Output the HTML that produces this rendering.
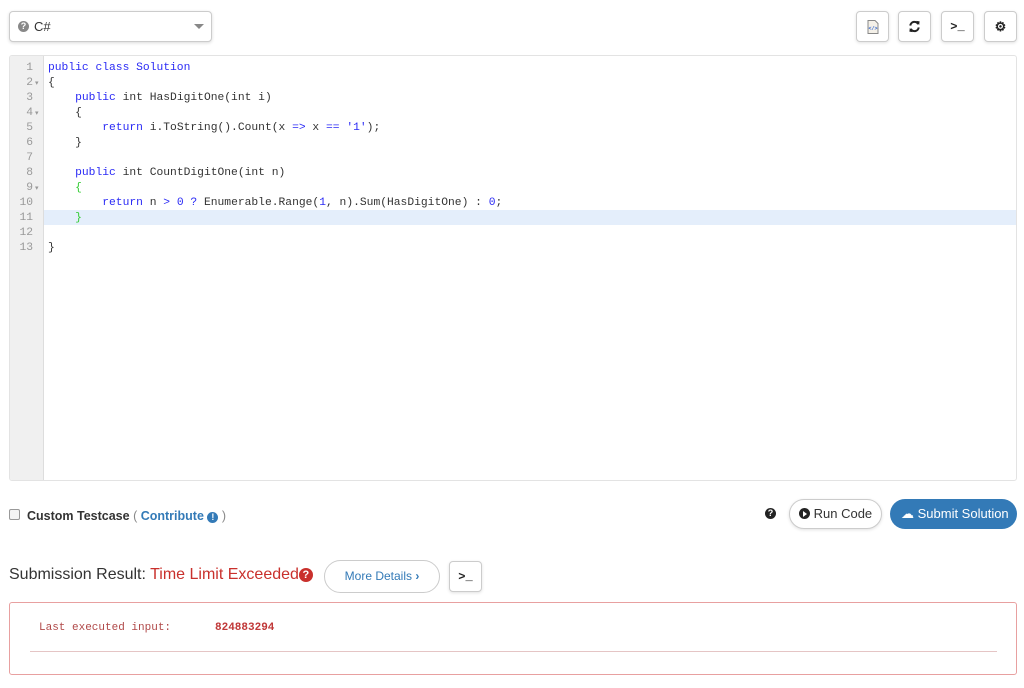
<!DOCTYPE html>
<html><head><meta charset="utf-8"><style>
*{box-sizing:border-box}
body{margin:0;width:1024px;height:688px;background:#fff;font-family:"Liberation Sans",sans-serif;font-size:13px;color:#333;position:relative;overflow:hidden}
.abs{position:absolute}
.sel{left:9px;top:11px;width:203px;height:31px;border:1px solid #ccc;border-radius:4px;box-shadow:0 1px 3px rgba(0,0,0,.15);background:#fff}
.btn{top:11px;width:33px;height:31px;border:1px solid #ccc;border-radius:4px;background:#fff;box-shadow:0 1px 3px rgba(0,0,0,.12);display:flex;align-items:center;justify-content:center;font-weight:bold;font-size:12px;color:#222}
.ed{left:9px;top:55px;width:1008px;height:426px;border:1px solid #e3e3e3;border-radius:3px;overflow:hidden}
.gut{position:absolute;left:0;top:0;width:34px;height:100%;background:#f0f0f0;border-right:1px solid #ddd}
.code{font-family:"Liberation Mono",monospace;font-size:11.3px;line-height:15px;white-space:pre}
.k{color:#2a2af5}.g{color:#3c3}
</style></head><body>
<div class="abs sel"><span class="abs" style="left:8px;top:9px;width:11px;height:11px;border-radius:50%;background:#888;color:#fff;font-size:9px;font-weight:bold;text-align:center;line-height:11px">?</span><span class="abs" style="left:24px;top:7px;font-size:13px">C#</span><span class="abs" style="left:184px;top:12px;border:5px solid transparent;border-top:5px solid #888"></span></div>
<div class="abs btn" style="left:856px"><svg width="12" height="14" viewBox="0 0 12 14"><path d="M1 .5h7l3 3v10H1z" fill="#f4f0e8" stroke="#888"/><text x="6" y="10" font-size="5" text-anchor="middle" fill="#36c" font-family="Liberation Mono">&lt;/&gt;</text></svg></div>
<div class="abs btn" style="left:898px"><svg width="13" height="13" viewBox="0 0 14 14"><path d="M2.5 6A4.5 4.5 0 0 1 11 4.5M11.5 8A4.5 4.5 0 0 1 3 9.5" fill="none" stroke="#222" stroke-width="2.2"/><path d="M9 1l3.5 0.5-0.5 4zM5 13l-3.5-.5.5-4z" fill="#222"/></svg></div>
<div class="abs btn" style="left:941px;font-family:'Liberation Mono',monospace">&gt;_</div>
<div class="abs btn" style="left:984px;font-size:13px">⚙</div>
<div class="abs ed">
<div class="gut"></div>
<div class="abs" style="left:34px;top:154px;width:980px;height:15px;background:#e4eefb"></div>
<div class="abs code" style="left:0;top:5px;width:23px;color:#999;text-align:right">1
2
3
4
5
6
7
8
9
10
11
12
13</div>
<div class="abs" style="left:25px;top:5px;font-size:7px;color:#999;line-height:15px;white-space:pre">
▾

▾




▾</div>
<div class="abs code" style="left:38px;top:5px;color:#333"><span class="k">public class Solution</span>
{
    <span class="k">public</span> int HasDigitOne(int i)
    {
        <span class="k">return</span> i.ToString().Count(x <span class="k">=&gt;</span> x <span class="k">==</span> <span class="k">'1'</span>);
    }

    <span class="k">public</span> int CountDigitOne(int n)
    <span class="g">{</span>
        <span class="k">return</span> n <span class="k">&gt;</span> <span class="k">0</span> <span class="k">?</span> Enumerable.Range(<span class="k">1</span>, n).Sum(HasDigitOne) : <span class="k">0</span>;
    <span class="g">}</span>

}</div>
</div>
<div class="abs" style="left:9px;top:509px;width:11px;height:11px;border:1px solid #999;border-radius:2px;background:#f4f4f4"></div>
<div class="abs" style="left:27px;top:509px;font-size:12.5px;font-weight:bold;color:#333">Custom Testcase <span style="font-weight:normal;color:#888">(</span> <span style="color:#337ab7">Contribute <span style="display:inline-block;width:11px;height:11px;border-radius:50%;background:#337ab7;color:#fff;font-size:9px;text-align:center;line-height:11px">!</span></span> <span style="font-weight:normal;color:#888">)</span></div>
<div class="abs" style="left:765px;top:508px;width:11px;height:11px;border-radius:50%;background:#222;color:#fff;font-size:9px;font-weight:bold;text-align:center;line-height:11px">?</div>
<div class="abs" style="left:789px;top:499px;width:93px;height:30px;border:1px solid #ccc;border-radius:15px;background:#fff;box-shadow:0 1px 3px rgba(0,0,0,.12);font-size:13px;color:#333;line-height:28px;padding-left:9px"><span style="display:inline-block;width:11px;height:11px;border-radius:50%;background:#222;vertical-align:-1px;position:relative"><span style="position:absolute;left:4px;top:2.5px;border:3px solid transparent;border-left:4px solid #fff;border-right:0"></span></span> Run Code</div>
<div class="abs" style="left:890px;top:499px;width:127px;height:30px;border-radius:15px;background:#337ab7;color:#fff;font-size:13px;line-height:30px;padding-left:11px">☁ Submit Solution</div>
<div class="abs" style="left:9px;top:566px;font-size:16px;color:#333">Submission Result: <span style="color:#c9302c">Time Limit Exceeded</span><span style="display:inline-block;width:14px;height:14px;border-radius:50%;background:#c9302c;color:#fff;font-size:11px;font-weight:bold;text-align:center;line-height:14px;vertical-align:1px">?</span></div>
<div class="abs" style="left:324px;top:560px;width:116px;height:33px;border:1px solid #ccc;border-radius:17px;background:#fff;color:#337ab7;font-size:12px;line-height:31px;text-align:center">More Details <b>›</b></div>
<div class="abs btn" style="left:449px;top:561px;height:31px;font-family:'Liberation Mono',monospace">&gt;_</div>
<div class="abs" style="left:9px;top:602px;width:1008px;height:73px;border:1px solid #e8a0a0;border-radius:3px"></div>
<div class="abs" style="left:39px;top:622px;font-family:'Liberation Mono',monospace;font-size:11px;color:#b04848">Last executed input:</div>
<div class="abs" style="left:215px;top:622px;font-family:'Liberation Mono',monospace;font-size:11px;color:#c03838;font-weight:bold">824883294</div>
<div class="abs" style="left:30px;top:651px;width:967px;height:1px;background:#e5c5c5"></div>
</body></html>
